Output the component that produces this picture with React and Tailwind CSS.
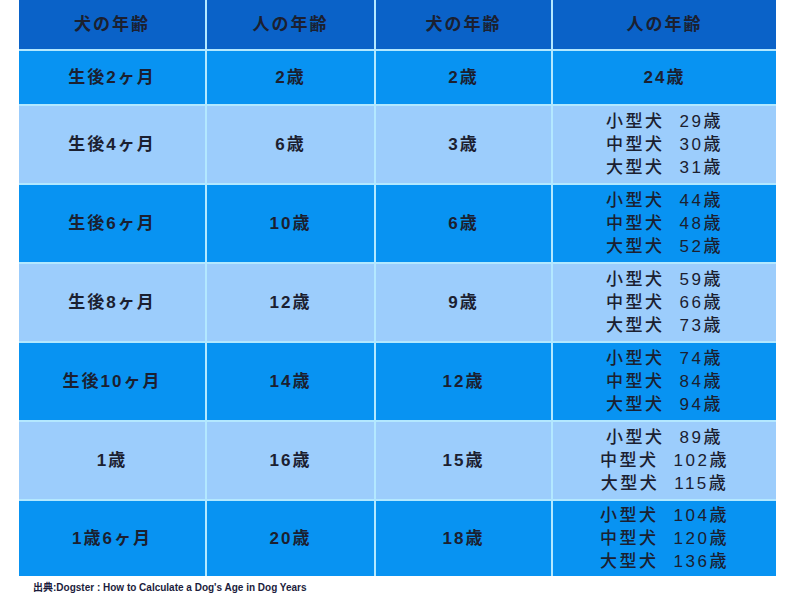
const rows = [
  { dog: '生後2ヶ月', human: '2歳', dog2: '2歳', human2: ['24歳'] },
  { dog: '生後4ヶ月', human: '6歳', dog2: '3歳', human2: [['小型犬', '29歳'], ['中型犬', '30歳'], ['大型犬', '31歳']] },
  { dog: '生後6ヶ月', human: '10歳', dog2: '6歳', human2: [['小型犬', '44歳'], ['中型犬', '48歳'], ['大型犬', '52歳']] },
  { dog: '生後8ヶ月', human: '12歳', dog2: '9歳', human2: [['小型犬', '59歳'], ['中型犬', '66歳'], ['大型犬', '73歳']] },
  { dog: '生後10ヶ月', human: '14歳', dog2: '12歳', human2: [['小型犬', '74歳'], ['中型犬', '84歳'], ['大型犬', '94歳']] },
  { dog: '1歳', human: '16歳', dog2: '15歳', human2: [['小型犬', '89歳'], ['中型犬', '102歳'], ['大型犬', '115歳']] },
  { dog: '1歳6ヶ月', human: '20歳', dog2: '18歳', human2: [['小型犬', '104歳'], ['中型犬', '120歳'], ['大型犬', '136歳']] },
]

const font = { fontFamily: '"Liberation Sans", "Noto Sans CJK JP", sans-serif' }

function Cell({ bg, children }) {
  return (
    <div className={`${bg} flex flex-col items-center justify-center text-[17px] font-bold tracking-[2px] text-[#1b2030] leading-[23px]`}>
      {children}
    </div>
  )
}

export default function App() {
  return (
    <div className="w-[800px] h-[600px] bg-white" style={font}>
      <div className="ml-[19px] w-[757px] grid grid-cols-[186px_167px_175px_223px] grid-rows-[49px_53px_77px_77px_77px_77px_77px_75px] gap-[2px] bg-[#b3e8ff]">
        {['犬の年齢', '人の年齢', '犬の年齢', '人の年齢'].map((h, i) => (
          <Cell key={i} bg="bg-[#0a62c8]">{h}</Cell>
        ))}
        {rows.map((r, i) => {
          const bg = i % 2 === 0 ? 'bg-[#0893f2]' : 'bg-[#9ccdfc]'
          return [
            <Cell key={i + 'a'} bg={bg}>{r.dog}</Cell>,
            <Cell key={i + 'b'} bg={bg}>{r.human}</Cell>,
            <Cell key={i + 'c'} bg={bg}>{r.dog2}</Cell>,
            <Cell key={i + 'd'} bg={bg}>
              {r.human2.map((line, j) =>
                typeof line === 'string' ? (
                  <span key={j}>{line}</span>
                ) : (
                  <span key={j} className="flex gap-[15px] font-medium tracking-[2.5px]">
                    <span>{line[0]}</span>
                    <span>{line[1]}</span>
                  </span>
                )
              )}
            </Cell>,
          ]
        })}
      </div>
      <div className="ml-[33px] mt-[5px] text-[10px] font-bold text-[#1c1c3c] leading-[14px]">
        出典:Dogster : How to Calculate a Dog's Age in Dog Years
      </div>
    </div>
  )
}
